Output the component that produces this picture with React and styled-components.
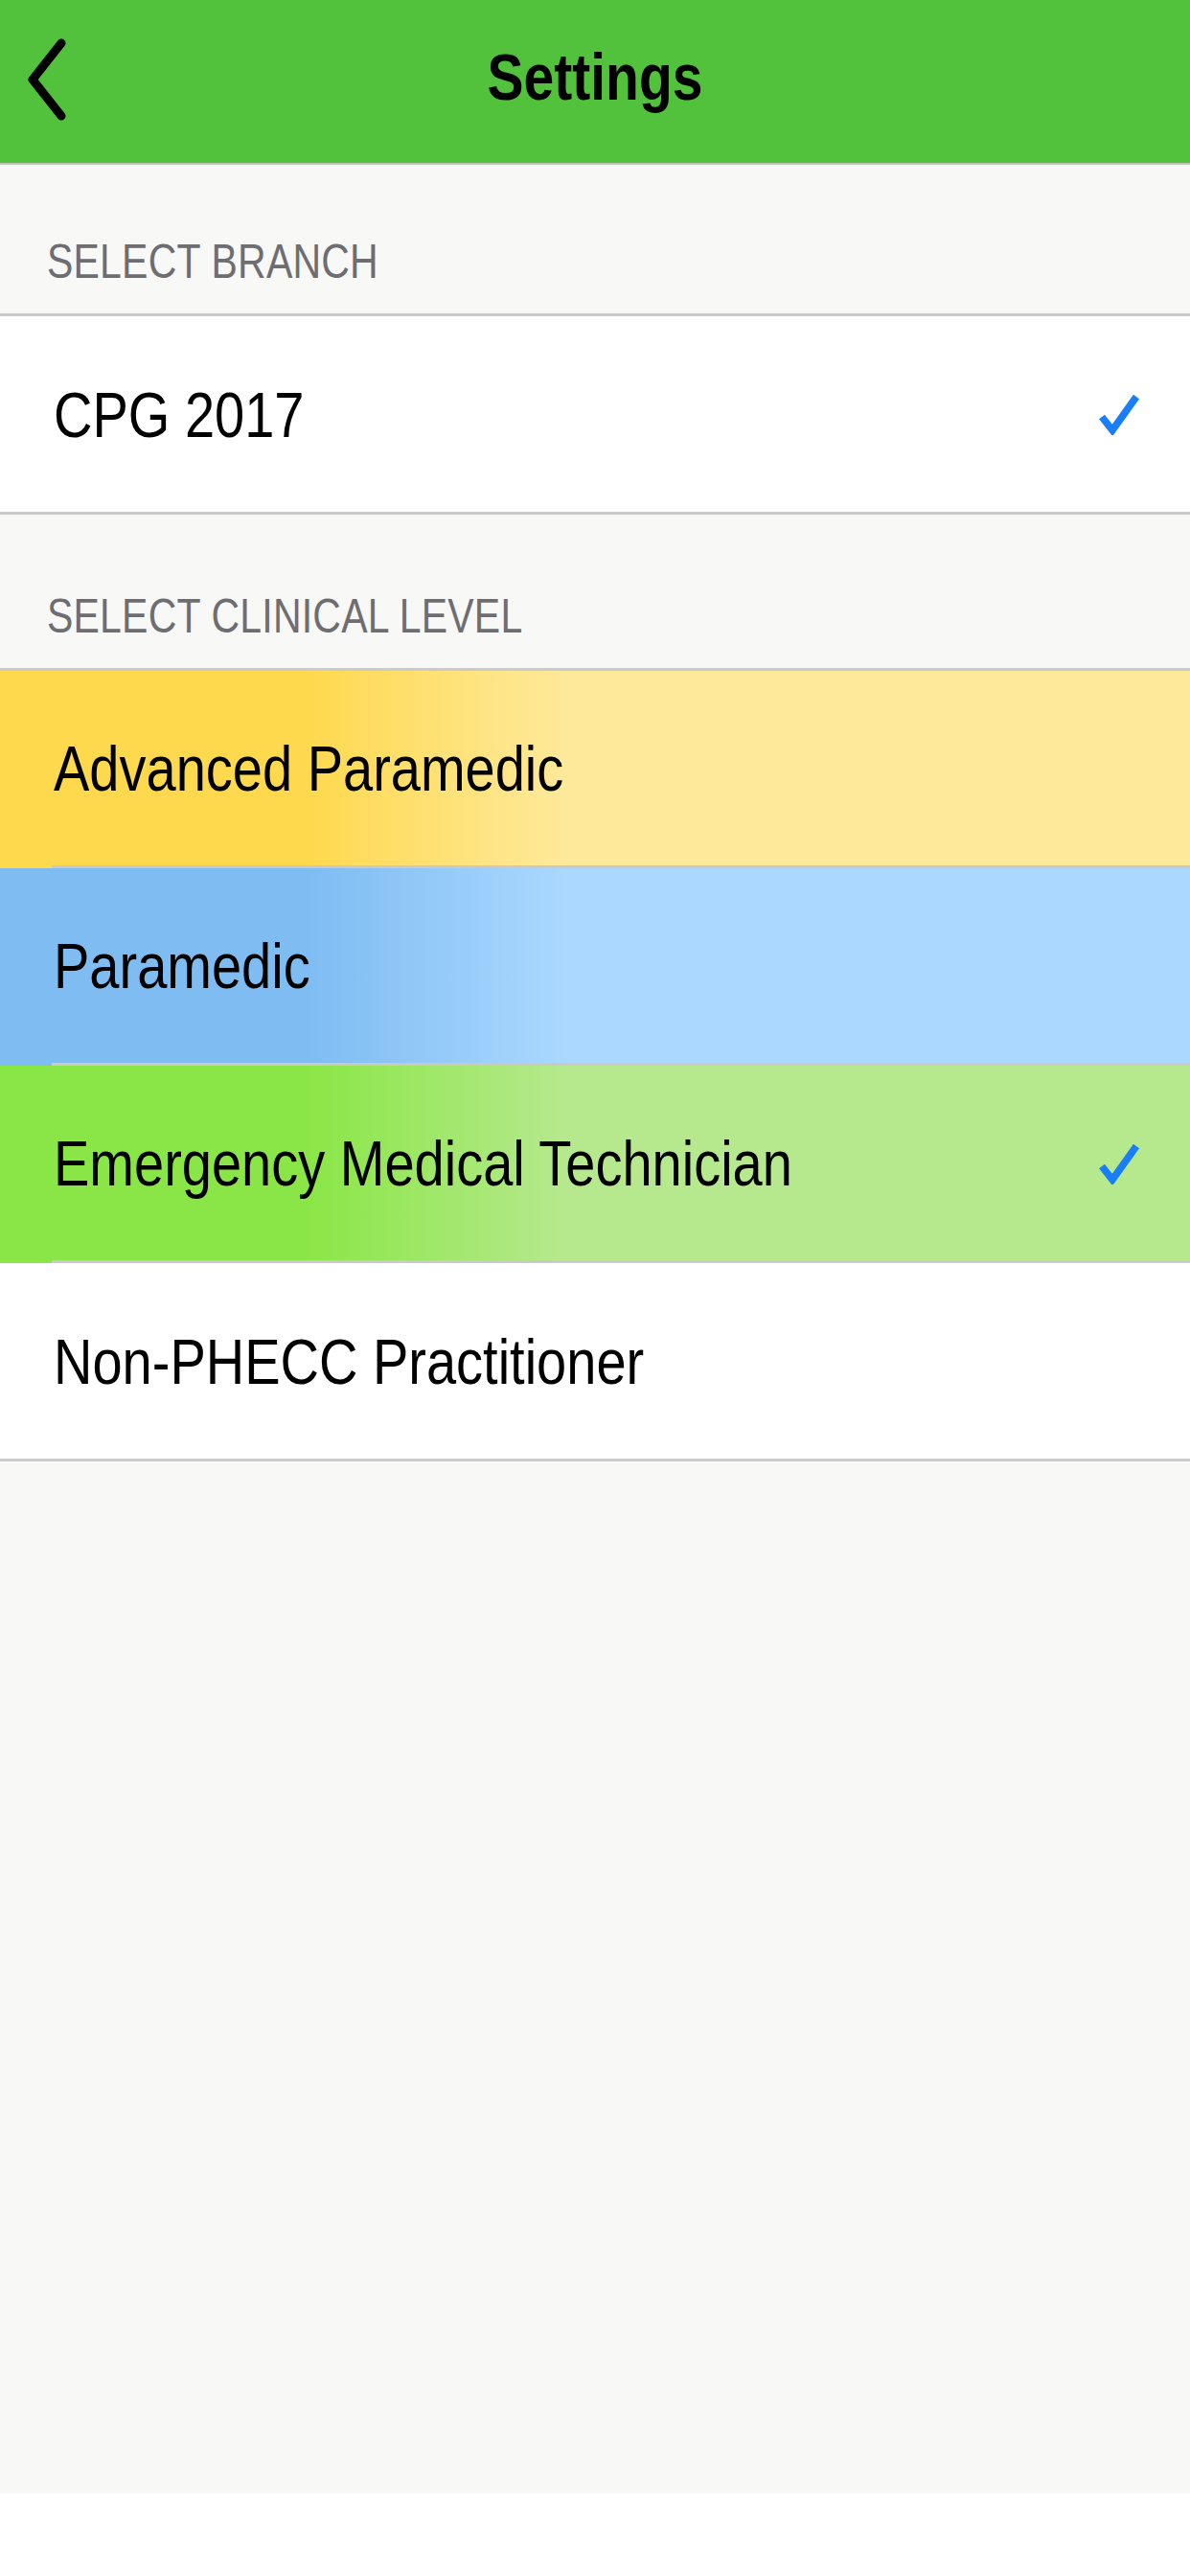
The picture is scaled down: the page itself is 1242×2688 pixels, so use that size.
import React, { useState } from 'react';
import styled, { createGlobalStyle } from 'styled-components';

const GlobalStyle = createGlobalStyle`
  html, body {
    margin: 0;
    padding: 0;
    background: #fff;
  }
  body {
    font-family: "Liberation Sans", Arial, sans-serif;
  }
  * {
    box-sizing: border-box;
  }
`;

const Page = styled.div`
  width: 1242px;
  min-height: 2602px;
  background-color: #f8f8f7;
`;

const NavBar = styled.div`
  height: 172px;
  background-color: #52c13c;
  border-bottom: 2px solid #bfc4bd;
  display: grid;
  grid-template-columns: 200px 1fr 200px;
  align-items: center;
`;

const BackButton = styled.button`
  background: none;
  border: 0;
  padding: 0 0 0 28px;
  height: 100%;
  display: flex;
  align-items: center;
  cursor: pointer;
`;

const Title = styled.h1`
  margin: 0;
  text-align: center;
  font-size: 57px;
  font-weight: bold;
  color: #000;
  transform: scaleY(1.2);
  padding-bottom: 8px;
`;

const SectionHeader = styled.div`
  height: ${p => p.$height}px;
  display: flex;
  align-items: flex-end;
  padding: 0 0 30px 49px;
  font-size: 41px;
  color: #6d6d72;
  letter-spacing: 0.2px;

  span {
    display: inline-block;
    transform: scaleY(1.22);
  }
`;

const Group = styled.div`
  border-top: 3px solid #cbcbce;
  border-bottom: 3px solid #cbcbce;
`;

const Row = styled.div`
  background: ${p => p.$bg || '#fff'};
  cursor: pointer;
`;

const RowInner = styled.div`
  margin-left: 54px;
  height: ${p => (p.$last ? 204 : 206)}px;
  padding-right: 52px;
  display: flex;
  align-items: center;
  justify-content: space-between;
  border-bottom: ${p => (p.$last ? '0' : '3px solid #c9c9c9')};
`;

const RowLabel = styled.span`
  display: inline-block;
  font-size: 56px;
  color: #000;
  margin-left: 2px;
  transform: scaleY(1.2);
`;

const Check = () => (
  <svg width="44" height="44" viewBox="0 0 44 44">
    <polyline
      points="4,25 15,39 40,4"
      fill="none"
      stroke="#1a7efb"
      strokeWidth="7.5"
      strokeLinecap="butt"
      strokeLinejoin="miter"
    />
  </svg>
);

const Chevron = () => (
  <svg width="50" height="92" viewBox="0 0 50 92">
    <polyline
      points="36,6 6,44 36,82"
      fill="none"
      stroke="#000"
      strokeWidth="9"
      strokeLinecap="round"
      strokeLinejoin="round"
    />
  </svg>
);

const gradient = (a, b) =>
  `linear-gradient(90deg, ${a} 0px, ${a} 320px, ${b} 590px, ${b} 100%)`;

const levels = [
  { name: 'Advanced Paramedic', bg: gradient('#fed94e', '#fee99b') },
  { name: 'Paramedic', bg: gradient('#7ebcf2', '#aad8fe') },
  { name: 'Emergency Medical Technician', bg: gradient('#8ae646', '#b6e98d') },
  { name: 'Non-PHECC Practitioner', bg: '#fff' },
];

const App = () => {
  const [level, setLevel] = useState(2);

  return (
    <Page>
      <GlobalStyle />
      <NavBar>
        <BackButton>
          <Chevron />
        </BackButton>
        <Title>Settings</Title>
        <div />
      </NavBar>

      <SectionHeader $height={155}>
        <span>SELECT BRANCH</span>
      </SectionHeader>
      <Group>
        <Row>
          <RowInner $last>
            <RowLabel>CPG 2017</RowLabel>
            <Check />
          </RowInner>
        </Row>
      </Group>

      <SectionHeader $height={160}>
        <span>SELECT CLINICAL LEVEL</span>
      </SectionHeader>
      <Group>
        {levels.map((l, i) => (
          <Row key={l.name} $bg={l.bg} onClick={() => setLevel(i)}>
            <RowInner $last={i === levels.length - 1}>
              <RowLabel>{l.name}</RowLabel>
              {level === i && <Check />}
            </RowInner>
          </Row>
        ))}
      </Group>
    </Page>
  );
};

export default App;
